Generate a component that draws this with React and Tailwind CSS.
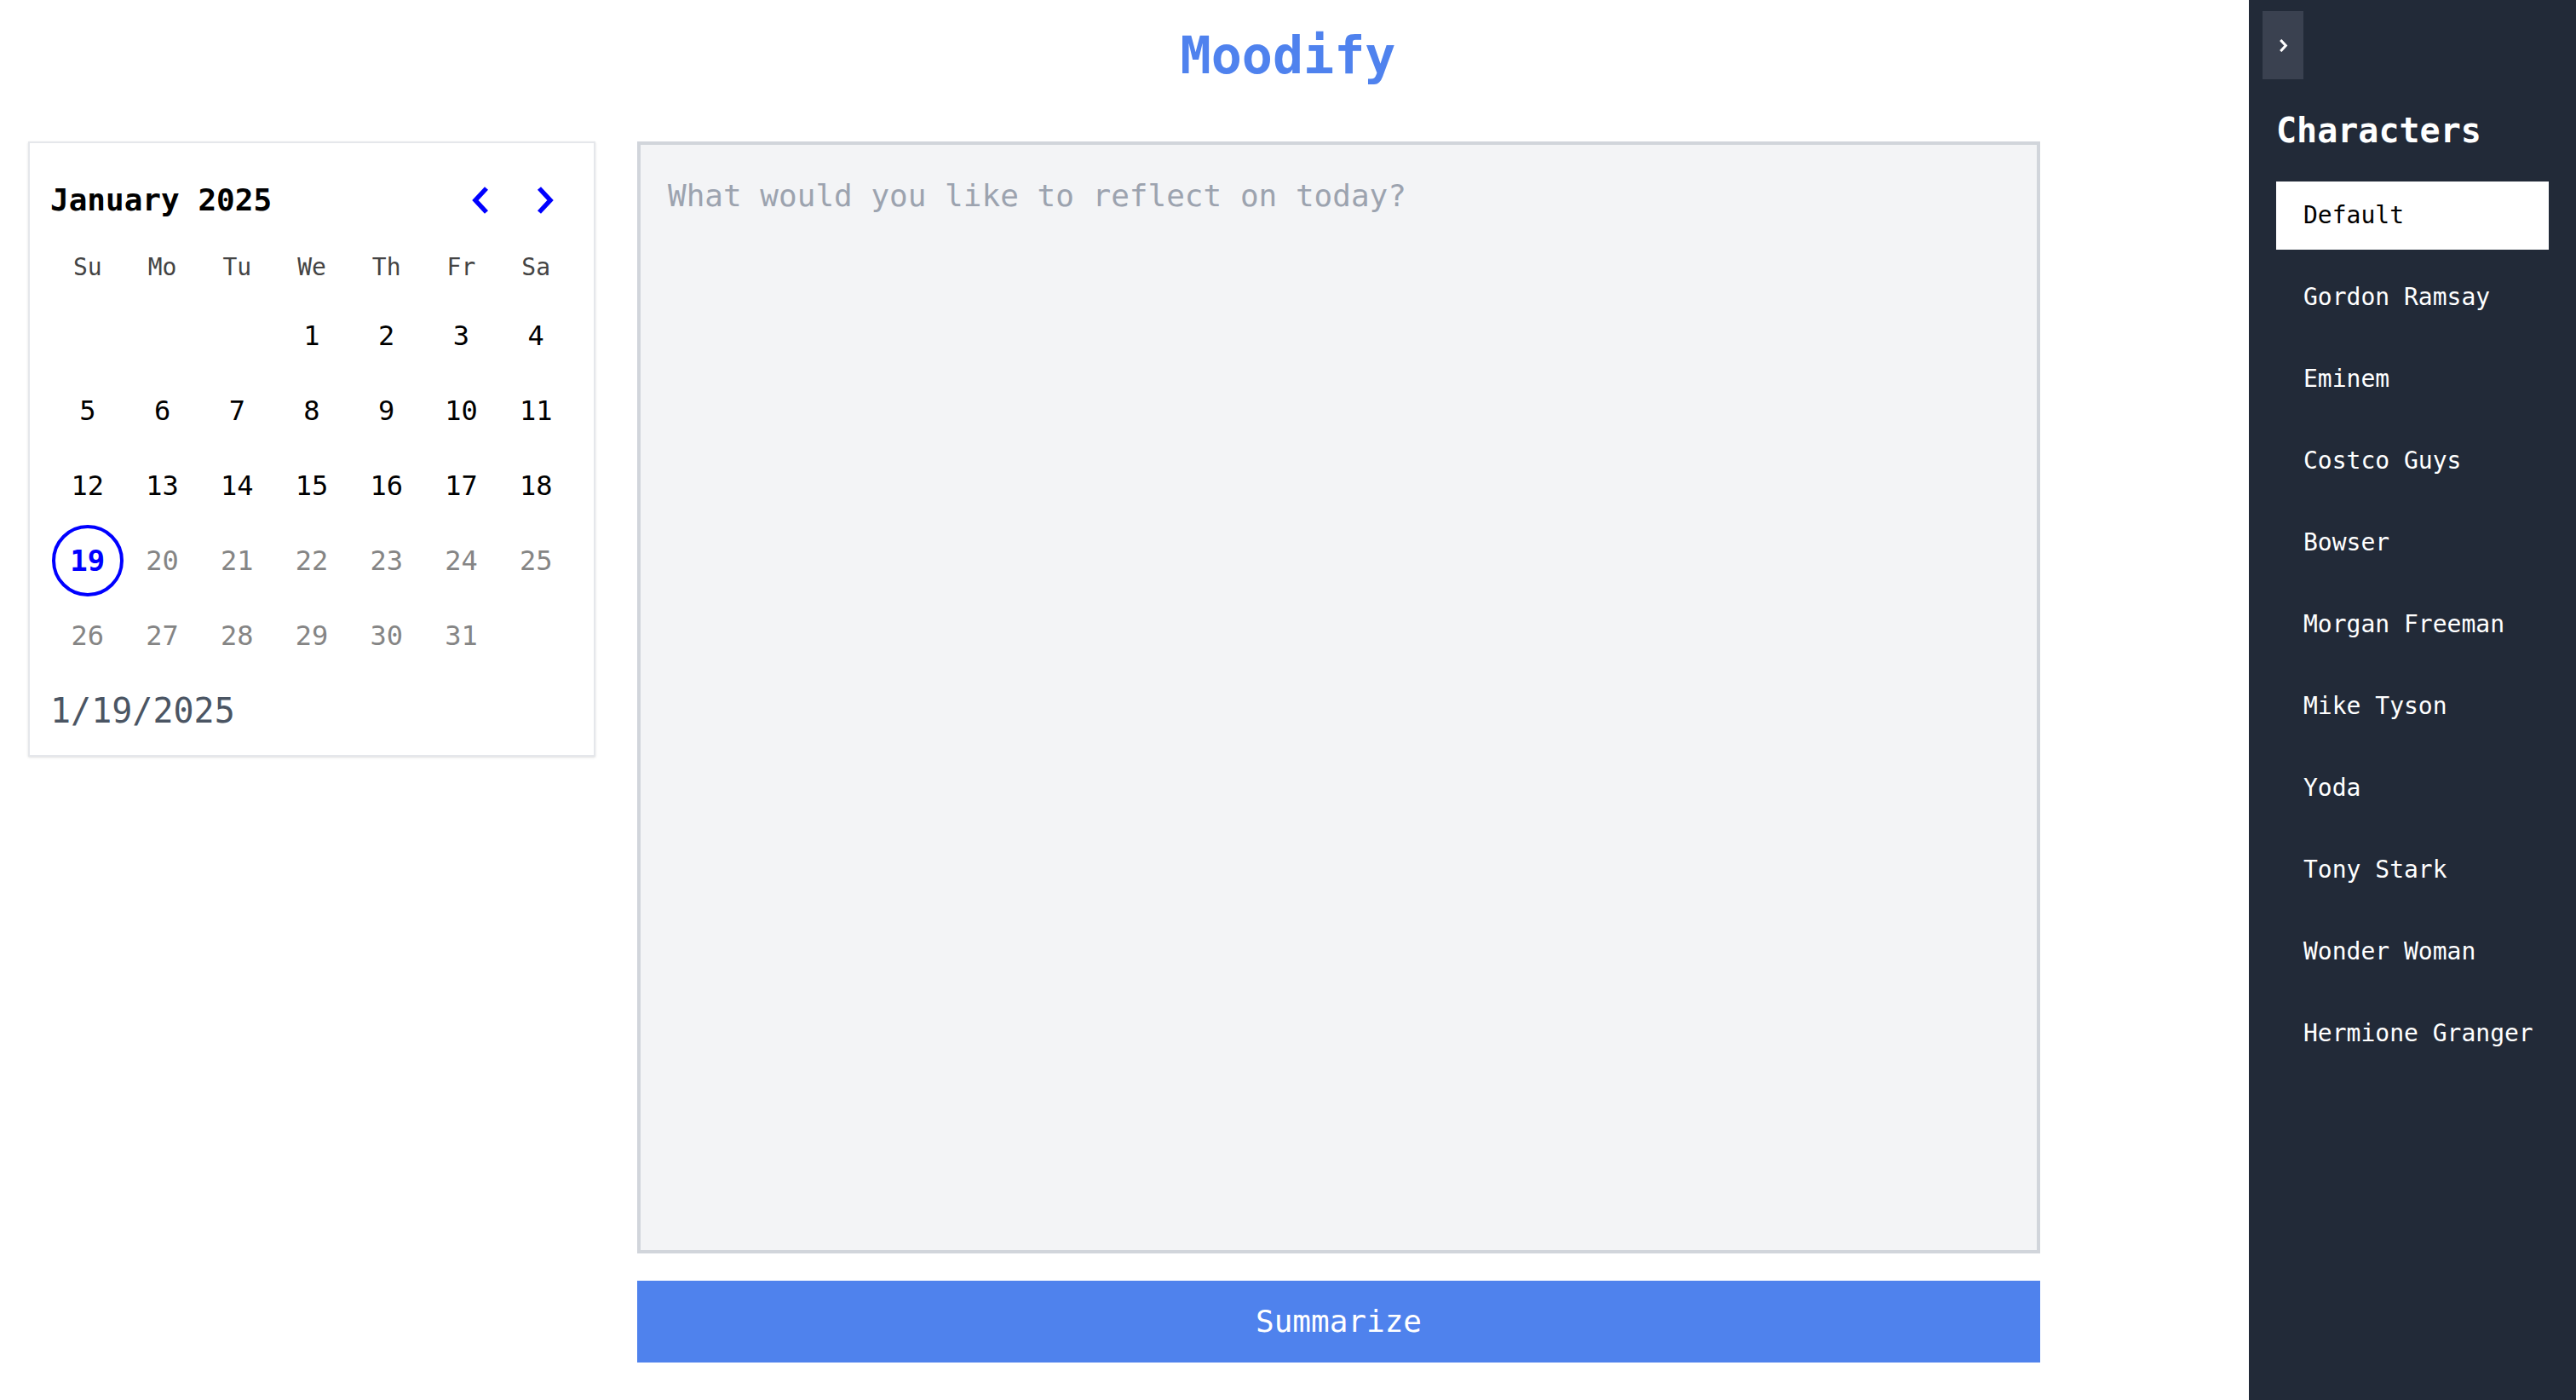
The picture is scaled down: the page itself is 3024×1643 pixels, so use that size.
import React, { useState } from 'react';

const CHARACTERS = [
  'Default',
  'Gordon Ramsay',
  'Eminem',
  'Costco Guys',
  'Bowser',
  'Morgan Freeman',
  'Mike Tyson',
  'Yoda',
  'Tony Stark',
  'Wonder Woman',
  'Hermione Granger',
];

const WEEKDAYS = ['Su', 'Mo', 'Tu', 'We', 'Th', 'Fr', 'Sa'];

const Chevron = ({ dir = 'right', className = '', strokeWidth = 4.5 }) => (
  <svg viewBox="0 0 20 32" className={className} fill="none" stroke="currentColor" strokeWidth={strokeWidth} strokeLinejoin="miter" strokeLinecap="butt">
    {dir === 'left' ? <polyline points="17,2 4,16 17,30" /> : <polyline points="3,2 16,16 3,30" />}
  </svg>
);

const Calendar = ({ selected, onSelect }) => {
  // January 2025 starts on a Wednesday
  const cells = [null, null, null, ...Array.from({ length: 31 }, (_, i) => i + 1)];

  return (
    <div className="w-[666px] shrink-0 border-2 border-[#e5e7eb] bg-white p-6 shadow-sm">
      {/* Header */}
      <div className="flex h-[86px] items-center">
        <h2 className="text-[36px] font-bold leading-[40px] text-black">January 2025</h2>
        <div className="ml-auto mr-[23px] flex items-center gap-[56px] text-[#0000ff]">
          <button className="block">
            <Chevron dir="left" strokeWidth={5.5} className="h-[32px] w-[20px]" />
          </button>
          <button className="block">
            <Chevron dir="right" strokeWidth={5.5} className="h-[32px] w-[20px]" />
          </button>
        </div>
      </div>

      {/* Weekdays */}
      <div className="grid h-[72px] grid-cols-7 items-center text-center text-[28px] text-[#444]">
        {WEEKDAYS.map((d) => (
          <div key={d}>{d}</div>
        ))}
      </div>

      {/* Days */}
      <div className="grid grid-cols-7">
        {cells.map((day, i) => {
          if (!day) return <div key={`e${i}`} className="h-[88px]" />;
          const isSelected = day === selected;
          const isFuture = day > 19;
          return (
            <button
              key={day}
              onClick={() => onSelect(day)}
              className="flex h-[88px] items-center justify-center text-[32px] leading-none"
            >
              {isSelected ? (
                <span className="flex h-[84px] w-[84px] items-center justify-center rounded-full border-4 border-[#0000ff] text-[34px] font-bold text-[#0000ff]">
                  {day}
                </span>
              ) : (
                <span className={isFuture ? 'text-[#858585]' : 'text-black'}>{day}</span>
              )}
            </button>
          );
        })}
      </div>

      <p className="mt-4 text-[40px] leading-[56px] text-[#4b5563]">1/{selected}/2025</p>
    </div>
  );
};

export default function App() {
  const [selected, setSelected] = useState(19);
  const [character, setCharacter] = useState('Default');
  const [entry, setEntry] = useState('');

  return (
    <div className="relative min-h-screen bg-white font-['DejaVu_Sans_Mono',monospace]">
      <h1 className="pt-[35px] text-center text-[60px] font-bold leading-none text-[#4f82ee]">Moodify</h1>

      <div className="mt-[71px] flex items-start gap-[49px] pl-[33px]">
        <Calendar selected={selected} onSelect={setSelected} />

        <div className="w-[1647px]">
          <textarea
            value={entry}
            onChange={(e) => setEntry(e.target.value)}
            placeholder="What would you like to reflect on today?"
            className="block h-[1305px] w-full resize-none border-4 border-[#d1d5db] bg-[#f3f4f6] p-8 text-[36px] leading-[56px] text-gray-800 outline-none placeholder:text-[#9ca3af]"
          />
          <button className="mt-8 block h-[96px] w-full bg-[#4f82ed] text-[36px] leading-[56px] text-white">
            Summarize
          </button>
        </div>
      </div>

      {/* Characters drawer */}
      <aside className="fixed right-0 top-0 flex h-screen w-[384px] flex-col bg-[#222a38] px-8">
        <button className="-ml-4 mt-[13px] flex h-20 w-12 items-center justify-center bg-[#3a4150] text-white">
          <Chevron dir="right" strokeWidth={6.5} className="h-[15px] w-[11px]" />
        </button>
        <h2 className="mt-8 text-[40px] font-bold leading-[56px] text-white">Characters</h2>
        <ul className="mt-8 flex flex-col gap-4">
          {CHARACTERS.map((name) => (
            <li key={name}>
              <button
                onClick={() => setCharacter(name)}
                className={`flex h-20 w-full items-center whitespace-nowrap px-8 text-left text-[28px] leading-[40px] ${
                  character === name ? 'bg-white text-black' : 'text-white'
                }`}
              >
                {name}
              </button>
            </li>
          ))}
        </ul>
      </aside>
    </div>
  );
}
